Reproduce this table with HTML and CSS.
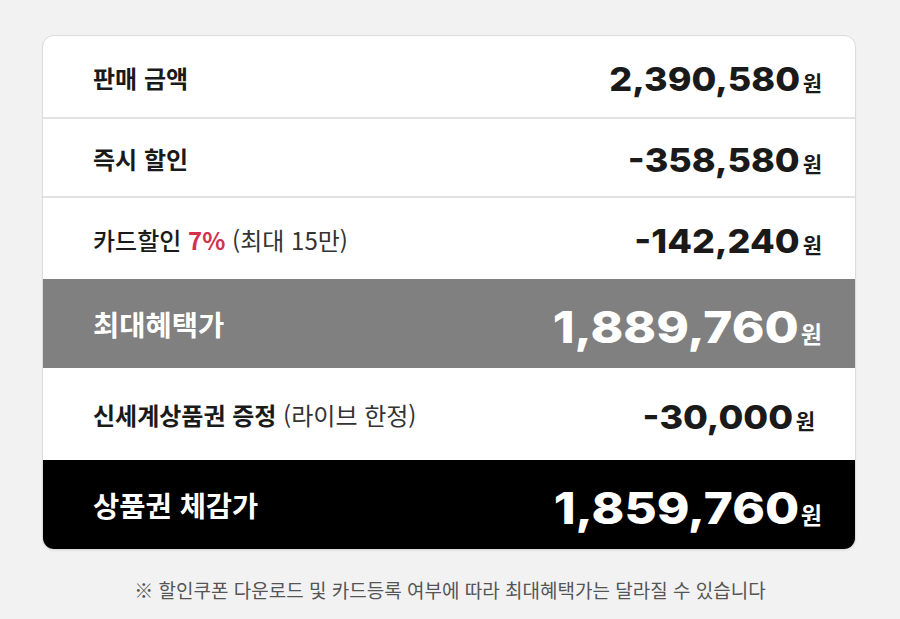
FILE: index.html
```html
<!DOCTYPE html>
<html lang="ko">
<head>
<meta charset="utf-8">
<link rel="stylesheet" href="styles.css">
</head>
<body>
<div class="page">
  <div class="card">
    <div class="row r1">
      <div class="label bold">판매 금액</div>
      <div class="value"><span class="num">2,390,580</span><span class="won">원</span></div>
    </div>
    <div class="row r2">
      <div class="label bold">즉시 할인</div>
      <div class="value"><span class="num">-358,580</span><span class="won">원</span></div>
    </div>
    <div class="row r3">
      <div class="label"><span class="medium">카드할인</span> <span class="red">7%</span> <span class="light">(최대 15만)</span></div>
      <div class="value"><span class="num">-142,240</span><span class="won">원</span></div>
    </div>
    <div class="row r4 gray">
      <div class="label big">최대혜택가</div>
      <div class="value"><span class="num bignum">1,889,760</span><span class="won bigwon">원</span></div>
    </div>
    <div class="row r5">
      <div class="label"><span class="semi">신세계상품권 증정</span> <span class="light">(라이브 한정)</span></div>
      <div class="value shift"><span class="num">-30,000</span><span class="won">원</span></div>
    </div>
    <div class="row r6 black">
      <div class="label big">상품권 체감가</div>
      <div class="value"><span class="num bignum">1,859,760</span><span class="won bigwon">원</span></div>
    </div>
  </div>
  <p class="note">※ 할인쿠폰 다운로드 및 카드등록 여부에 따라 최대혜택가는 달라질 수 있습니다</p>
</div>
</body>
</html>
```

FILE: styles.css
```css
html, body {
  margin: 0;
  padding: 0;
  background: #f2f2f2;
}
body {
  font-family: "Noto Sans CJK KR", "Noto Sans", sans-serif;
  color: #1a1a1a;
}
.page {
  width: 900px;
  height: 619px;
  padding-top: 35px;
  box-sizing: border-box;
}
.card {
  margin: 0 44px 0 42px;
  background: #fff;
  border: 1px solid #dcdcdc;
  border-radius: 12px;
  overflow: hidden;
  box-shadow: 0 1px 2px rgba(0,0,0,0.06);
}
.row {
  display: flex;
  align-items: center;
  justify-content: space-between;
  padding: 0 33px 0 50px;
  box-sizing: border-box;
}
.r1 { height: 83px; border-bottom: 2px solid #e2e2e2; }
.r2 { height: 79px; border-bottom: 2px solid #e2e2e2; }
.r3 { height: 81px; }
.r4 { height: 89px; }
.r5 { height: 92px; }
.r6 { height: 89px; }
.gray { background: #808080; color: #fff; }
.black { background: #000; color: #fff; }
.label {
  font-size: 24px;
  line-height: 1;
  letter-spacing: 0;
  padding-top: 2px;
}
.bold { font-weight: 700; }
.medium { font-weight: 500; }
.semi { font-weight: 600; }
.light { font-weight: 400; color: #333; }
.red { color: #d2324e; font-weight: 700; }
.big { font-size: 28.5px; font-weight: 700; }
.value {
  display: flex;
  align-items: baseline;
  padding-top: 6px;
}
.shift { margin-right: 7px; }
.num {
  display: inline-block;
  font-family: Inter, "Noto Sans", sans-serif;
  font-weight: 800;
  font-size: 33px;
  letter-spacing: 0;
  line-height: 1;
  transform: scaleX(1.09);
  transform-origin: right center;
}
.bignum {
  font-size: 44px;
  transform: scaleX(1.125);
}
.won {
  font-size: 21px;
  font-weight: 700;
  margin-left: 3px;
  line-height: 1;
}
.bigwon {
  font-size: 23px;
  margin-left: 2px;
}
.note {
  margin: 26px 0 0;
  text-align: center;
  font-size: 19px;
  color: #555;
  letter-spacing: 0;
}
```
